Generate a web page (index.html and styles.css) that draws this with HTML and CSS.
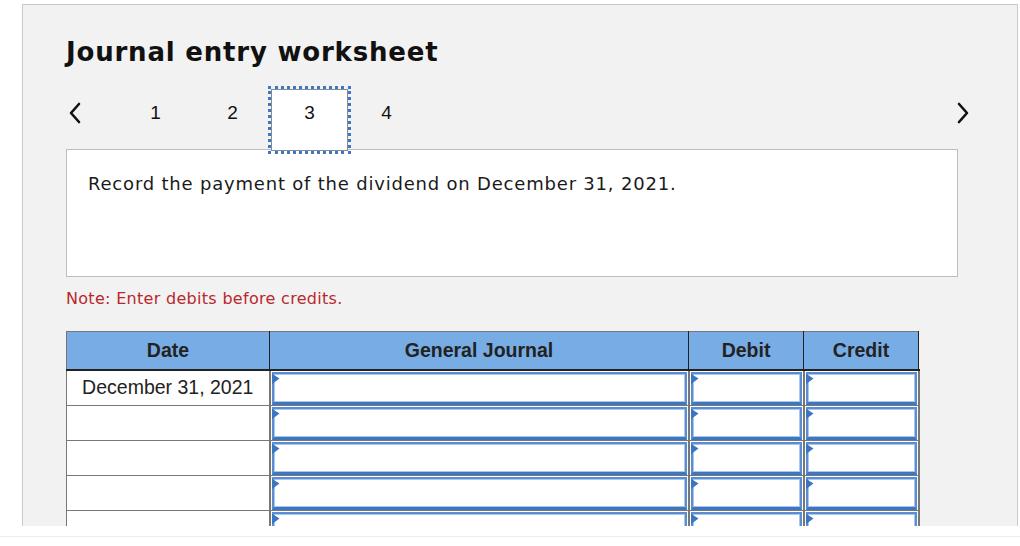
FILE: index.html
```html
<!DOCTYPE html>
<html>
<head>
<meta charset="utf-8">
<link rel="stylesheet" href="styles.css">
</head>
<body>
<div class="page">
  <div class="panel">
    <h1 class="title">Journal entry worksheet</h1>
    <div class="nav">
      <span class="chev chev-left"><svg width="14" height="22" viewBox="0 0 14 22"><path d="M11 2 L3 11 L11 20" fill="none" stroke="#111" stroke-width="2.6" stroke-linecap="round" stroke-linejoin="round"/></svg></span>
      <div class="steps">
        <span class="step">1</span>
        <span class="step">2</span>
        <span class="step active">3</span>
        <span class="step">4</span>
      </div>
      <span class="chev chev-right"><svg width="14" height="22" viewBox="0 0 14 22"><path d="M3 2 L11 11 L3 20" fill="none" stroke="#111" stroke-width="2.6" stroke-linecap="round" stroke-linejoin="round"/></svg></span>
    </div>
    <div class="question">Record the payment of the dividend on December 31, 2021.</div>
    <p class="note">Note: Enter debits before credits.</p>
    <table class="journal">
      <thead>
        <tr><th class="c-date">Date</th><th class="c-gj">General Journal</th><th class="c-amt">Debit</th><th class="c-amt">Credit</th></tr>
      </thead>
      <tbody>
        <tr><td class="date">December 31, 2021</td><td class="in"><div class="box"></div></td><td class="in"><div class="box"></div></td><td class="in"><div class="box"></div></td></tr>
        <tr><td class="date"></td><td class="in"><div class="box"></div></td><td class="in"><div class="box"></div></td><td class="in"><div class="box"></div></td></tr>
        <tr><td class="date"></td><td class="in"><div class="box"></div></td><td class="in"><div class="box"></div></td><td class="in"><div class="box"></div></td></tr>
        <tr><td class="date"></td><td class="in"><div class="box"></div></td><td class="in"><div class="box"></div></td><td class="in"><div class="box"></div></td></tr>
        <tr><td class="date"></td><td class="in"><div class="box"></div></td><td class="in"><div class="box"></div></td><td class="in"><div class="box"></div></td></tr>
        <tr><td class="date"></td><td class="in"><div class="box"></div></td><td class="in"><div class="box"></div></td><td class="in"><div class="box"></div></td></tr>
      </tbody>
    </table>
  </div>
</div>
<div class="footer-line"></div>
</body>
</html>
```

FILE: styles.css
```css
html, body {
  margin: 0;
  padding: 0;
  background: #ffffff;
}
body {
  width: 1020px;
  height: 546px;
  overflow: hidden;
}
.page {
  padding: 4px 2px 0 22px;
  height: 522px;
  overflow: hidden;
}
.panel {
  background: #f2f2f2;
  border: 1px solid #c8c8c8;
  border-bottom: none;
  height: 600px;
  padding: 0 0 0 43px;
  box-sizing: border-box;
  font-family: "DejaVu Sans", Verdana, sans-serif;
  color: #111;
}
.title {
  margin: 0;
  padding-top: 31px;
  font-size: 26px;
  line-height: 32px;
  font-weight: bold;
  letter-spacing: 0.8px;
  color: #111;
}
.nav {
  display: flex;
  align-items: center;
  width: 904px;
  height: 62px;
  margin-top: 21px;
  margin-bottom: -2px;
  position: relative;
  z-index: 1;
}
.chev {
  display: flex;
  align-items: center;
  height: 22px;
  margin-bottom: 15px;
}
.chev-left {
  width: 51px;
  padding-left: 2px;
  box-sizing: border-box;
}
.chev-right {
  margin-left: auto;
}
.steps {
  display: flex;
  height: 62px;
}
.step {
  width: 77px;
  height: 62px;
  display: flex;
  align-items: center;
  justify-content: center;
  padding-bottom: 15px;
  font-family: "Liberation Sans", Arial, sans-serif;
  font-size: 19px;
  color: #111;
  box-sizing: border-box;
}
.step.active {
  background: #ffffff;
  border: 1px solid #8a8a8a;
  outline: 3px dotted #3d78c4;
  outline-offset: 0;
}
.question {
  width: 892px;
  height: 128px;
  box-sizing: border-box;
  background: #ffffff;
  border: 1px solid #bdbdbd;
  padding: 22px 0 0 21px;
  font-size: 18px;
  line-height: 24px;
  letter-spacing: 0.8px;
  color: #1a1a1a;
}
.note {
  margin: 12px 0 0 0;
  font-size: 16px;
  line-height: 20px;
  letter-spacing: 0.3px;
  color: #b8282d;
}
.journal {
  margin-top: 22px;
  width: 852px;
  border-collapse: collapse;
  table-layout: fixed;
  font-family: "Liberation Sans", Arial, sans-serif;
}
.journal th {
  background: #78ace4;
  height: 38px;
  box-sizing: border-box;
  padding: 0;
  font-size: 19.5px;
  font-weight: bold;
  color: #222;
  border-top: 1px solid #777;
  border-left: 1px solid #222;
  border-right: 1px solid #222;
  border-bottom: 2px solid #222;
}
.journal th:first-child { border-left-color: #777; }
.c-date { width: 203px; }
.c-gj { width: 419px; }
.c-amt { width: 115px; }
.journal td {
  height: 35px;
  padding: 0;
  box-sizing: border-box;
  background: #ffffff;
  border: 1px solid #777;
}
.journal td.date {
  text-align: center;
  font-size: 19.5px;
  color: #222;
}
.journal td.in {
  padding: 1px 1px 0 1px;
  border-width: 1px 2px 1px 2px;
}
.box {
  position: relative;
  height: 33px;
  box-sizing: border-box;
  border: 2px solid #5a8dd2;
  border-bottom: 3px solid #3f76c0;
  box-shadow: inset 0 0 0 1px #a9c6ec;
  background: #ffffff;
}
.box::before {
  content: "";
  position: absolute;
  left: -2px;
  top: 0;
  width: 8px;
  height: 11px;
  background: #3b76c0;
  clip-path: polygon(0 0, 100% 45%, 0 100%);
}
.footer-line {
  position: absolute;
  left: 0;
  top: 536px;
  width: 1020px;
  height: 1px;
  background: #ececec;
}
```
